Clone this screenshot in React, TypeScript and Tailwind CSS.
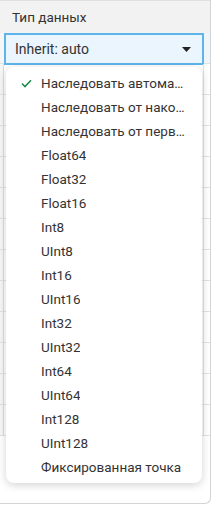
import React from "react";

const options = [
  "Наследовать автоматически",
  "Наследовать от наконечника",
  "Наследовать от первого входа",
  "Float64",
  "Float32",
  "Float16",
  "Int8",
  "UInt8",
  "Int16",
  "UInt16",
  "Int32",
  "UInt32",
  "Int64",
  "UInt64",
  "Int128",
  "UInt128",
  "Фиксированная точка",
];

const Row = (props: { children?: React.ReactNode }) => (
  <div className="flex h-[31px] border-b border-[#e2e2e2]">
    <div className="w-[3px] bg-[#f6f6f6] border-r border-[#dcdcdc] box-content" />
    <div className="w-[199px] border-r border-[#e2e2e2] box-content">{props.children}</div>
    <div className="flex-1" />
  </div>
);

export default function App() {
  return (
    <div className="relative w-[211px] h-[504px] bg-white border-r border-b border-[#d4d4d4] rounded-br-[6px] overflow-hidden font-['Roboto','Noto_Sans',sans-serif] text-[13.5px] text-[#333]">
      <div className="flex h-[33px] items-center bg-[#f2f2f2] border-t border-[#e0e0e0] pl-[12px]">
        Тип данных
      </div>
      <div className="flex h-[31px] border-b border-[#e2e2e2]">
        <div className="w-[4px] bg-[#f6f6f6]" />
        <div className="w-[200px] h-[32px] flex items-center justify-between bg-[#eaf5fd] border-2 border-[#5cb4ea] pl-[9px] pr-[11px] text-[14px]">
          <span>Inherit: auto</span>
          <svg width="9" height="5" viewBox="0 0 9 5">
            <path d="M0 0h9L4.5 5z" fill="#222" />
          </svg>
        </div>
        <div className="flex-1 bg-[#eef6fc]" />
      </div>
      {Array.from({ length: 12 }).map((_, i) => (
        <Row key={i} />
      ))}

      <div className="absolute left-[6px] top-[67px] w-[196px] py-1 bg-white rounded-[8px] shadow-[0_2px_8px_rgba(0,0,0,0.18)]">
        {options.map((opt, i) => (
          <div key={opt} className="relative flex items-center h-[24px] pl-[35px] pr-[14px]">
            {i === 0 && (
              <svg className="absolute left-[15px]" width="11" height="9" viewBox="0 0 11 9">
                <path d="M1 4.5l3 3L10 1.2" fill="none" stroke="#1f8a4c" strokeWidth="1.6" />
              </svg>
            )}
            <span className="truncate">{opt}</span>
          </div>
        ))}
      </div>
    </div>
  );
}
